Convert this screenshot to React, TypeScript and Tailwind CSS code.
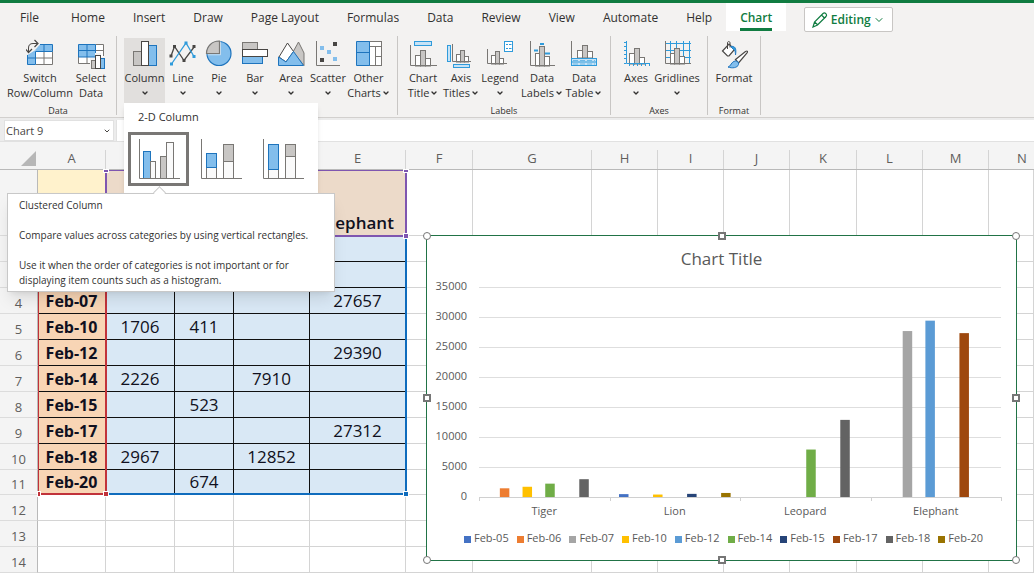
import { useState, type ReactNode } from 'react';
import { ChevronDown } from 'lucide-react';

const TABS = [
    'File', 'Home', 'Insert', 'Draw', 'Page Layout', 'Formulas',
    'Data', 'Review', 'View', 'Automate', 'Help', 'Chart'
];

const ANIMALS = ['Tiger', 'Lion', 'Leopard', 'Elephant'];

type Series = { date: string; color: string; values: (number | null)[] };

const SERIES: Series[] = [
    { date: 'Feb-05', color: '#4472c4', values: [null, 480, null, null] },
    { date: 'Feb-06', color: '#ed7d31', values: [1450, null, null, null] },
    { date: 'Feb-07', color: '#a5a5a5', values: [null, null, null, 27657] },
    { date: 'Feb-10', color: '#ffc000', values: [1706, 411, null, null] },
    { date: 'Feb-12', color: '#5b9bd5', values: [null, null, null, 29390] },
    { date: 'Feb-14', color: '#70ad47', values: [2226, null, 7910, null] },
    { date: 'Feb-15', color: '#264478', values: [null, 523, null, null] },
    { date: 'Feb-17', color: '#9e480e', values: [null, null, null, 27312] },
    { date: 'Feb-18', color: '#636363', values: [2967, null, 12852, null] },
    { date: 'Feb-20', color: '#997300', values: [null, 674, null, null] },
];

const COLUMNS = [
    { name: 'A', width: 'w-[68px]' },
    { name: 'B', width: 'w-[69px]' },
    { name: 'C', width: 'w-[59px]' },
    { name: 'D', width: 'w-[76px]' },
    { name: 'E', width: 'w-24' },
    { name: 'F', width: 'w-[67px]' },
    { name: 'G', width: 'w-[119px]' },
    { name: 'H', width: 'w-[66px]' },
    { name: 'I', width: 'w-[66px]' },
    { name: 'J', width: 'w-[66px]' },
    { name: 'K', width: 'w-[67px]' },
    { name: 'L', width: 'w-[66px]' },
    { name: 'M', width: 'w-[66px]' },
    { name: 'N', width: '' },
];

const BLUE = '#83beec';
const EDGE = '#1e74bd';
const SKY = '#2f9bdb';
const GRAY = '#c8c6c4';
const INK = '#484644';
const LINE = '#797774';

/* Ribbon icons */

function Icon({ children }: { children: ReactNode }) {
    return (
        <svg width="28" height="32" viewBox="0 0 28 32" fill="none" className="shrink-0" aria-hidden="true">
            {children}
        </svg>
    );
}

// three small bars standing on a baseline: [x, y, width]
function MiniBars({ bars, base }: { bars: number[][]; base: number }) {
    return (
        <>
            {bars.map(([x, y, w], i) => (
                <rect key={x} x={x + 0.5} y={y + 0.5} width={w} height={base - y - 0.5} fill={i === 1 ? GRAY : '#fff'} stroke={LINE} />
            ))}
        </>
    );
}

const SwitchIcon = () => (
    <Icon>
        <path d="M14 6.500h12.500v7H9.500v-2z" fill={BLUE} />
        <path d="M1.500 17l8-5v14.500h-8z" fill={BLUE} />
        <path d="M10 13.500h16.500v13H10z" fill="#fff" />
        <path d="M10 20h16.500M18 13.500v13M10 26.500h16.500v-13" stroke={LINE} />
        <path d="M14 6.500h12.500v7H9.500v13h-8V17M18 6.500v7M1.500 20h8" stroke={EDGE} />
        <path d="M2.500 14.500V10c0-3 1.500-4.500 4.500-4.500h4.500" stroke={INK} />
        <path d="M-.5 11l3 3.500L6 11M8.500 2l3.500 3.500L8.500 9" stroke={INK} strokeWidth="1.200" />
    </Icon>
);

const SelectIcon = () => (
    <Icon>
        <path d="M1.500 6.500h17V19h-17z" fill={BLUE} />
        <path d="M1.500 19h17v6.500h-17zM18.500 6.500h8v13h-8z" fill="#fff" />
        <path d="M1.500 19v6.500H14M10 19v6.500M18.500 19v-6.500M18.500 6.500h8V18M18.500 12.500h8" stroke={LINE} />
        <path d="M1.500 6.500h17V19h-17zM1.500 12.500h17M10 6.500V19" stroke={EDGE} />
        <path d="M13 20h5v-5h6v4h4v13H13z" fill="#f3f2f1" />
        <rect x="14.500" y="22.500" width="4" height="8" fill={GRAY} stroke={LINE} />
        <rect x="23.500" y="20.500" width="4" height="10" fill={BLUE} stroke={EDGE} />
        <rect x="18.500" y="17.500" width="5" height="13" fill="#fff" stroke={INK} />
    </Icon>
);

const ColumnIcon = () => (
    <Icon>
        <rect x="2.500" y="13.500" width="8" height="14" fill={GRAY} stroke={LINE} />
        <rect x="17.500" y="7.500" width="8" height="20" fill={BLUE} stroke={EDGE} />
        <rect x="10.500" y="3.500" width="7" height="24" fill="#fff" stroke={INK} />
    </Icon>
);

const LineIcon = () => (
    <Icon>
        <path d="M2 18L5.500 8.500 15 22.500 25.500 8.500" stroke={INK} strokeWidth="1.300" />
        <path d="M2.500 26L17 5l8 13.500" stroke={SKY} strokeWidth="1.300" />
        {[[2, 18], [5.5, 8.5], [15, 22.5], [25, 8.5]].map(([x, y]) => (
            <rect key={x} x={x - 1.5} y={y - 1.5} width="3" height="3" fill={INK} />
        ))}
        {[[2.5, 26], [17, 5], [25, 18.5]].map(([x, y]) => (
            <rect key={x} x={x - 1.5} y={y - 1.5} width="3" height="3" fill={SKY} />
        ))}
    </Icon>
);

const PieIcon = () => (
    <Icon>
        <circle cx="14" cy="15.500" r="12" fill={BLUE} stroke={EDGE} strokeWidth="1.200" />
        <path d="M14.500 15.500V3A12.500 12.500 0 0 0 1.500 15.500z" fill={GRAY} stroke={LINE} strokeWidth="1.200" />
        <path d="M2.500 16.800H15.500V3.500" stroke="#f3f2f1" strokeWidth=".6" />
    </Icon>
);

const BarIcon = () => (
    <Icon>
        <rect x="1.500" y="4.500" width="15" height="7" fill={GRAY} stroke={LINE} />
        <rect x="1.500" y="18.500" width="20" height="7" fill={BLUE} stroke={EDGE} />
        <rect x="1.500" y="11.500" width="25" height="7" fill="#fff" stroke={INK} />
    </Icon>
);

const AreaIcon = () => (
    <Icon>
        <path d="M16 14l5.500-10L27 15v12.500z" fill={GRAY} stroke={LINE} />
        <path d="M2 19l8.500-14L16.500 13.500 9 24z" fill="#fff" stroke={INK} />
        <path d="M1.500 27.500V19L9 24l7.500-10.500L26.500 27.500z" fill={BLUE} stroke={EDGE} />
    </Icon>
);

const ScatterIcon = () => (
    <Icon>
        <path d="M2.500 3v24.500H26" stroke={LINE} />
        <path d="M6 8h4v4H6zM13 12h4v4h-4zM19 19h4v4h-4z" fill={BLUE} />
        <path d="M19 4h4v4h-4zM6 20h4v4H6z" fill={INK} />
    </Icon>
);

const OtherIcon = () => (
    <Icon>
        <rect x="14.500" y="3.500" width="12" height="24" fill="#fff" stroke={LINE} />
        <path d="M14.500 8.500h12M20.500 8.500v19M20.500 18.500h6" stroke={LINE} />
        <path d="M1.500 3.500h13v24h-13zM1.500 14.500h13" fill={BLUE} stroke={EDGE} />
    </Icon>
);

const ChartTitleIcon = () => (
    <Icon>
        <rect x="5.500" y="3.500" width="17" height="4" fill="#c7e3f6" stroke={SKY} />
        <MiniBars base={28} bars={[[6, 17, 5], [11, 12, 5], [16, 20, 5]]} />
        <path d="M1.500 7v20.500H28" stroke={LINE} />
    </Icon>
);

const AxisTitlesIcon = () => (
    <Icon>
        <rect x=".5" y="7.500" width="3" height="16" fill="#c7e3f6" stroke={SKY} />
        <rect x="6.500" y="26.500" width="16" height="3" fill="#c7e3f6" stroke={SKY} />
        <MiniBars base={24} bars={[[9, 16, 4], [13, 12, 4], [17, 18, 4]]} />
        <path d="M5.500 6v17.500H24" stroke={LINE} />
    </Icon>
);

const LegendIcon = () => (
    <Icon>
        <MiniBars base={26} bars={[[5, 17, 4], [9, 13, 4], [13, 20, 4]]} />
        <path d="M1.500 11v14.500H21" stroke={LINE} />
        <rect x="18.500" y="3.500" width="8" height="10" fill="#fff" stroke={SKY} />
        <path d="M20 6.500h2M23 6.500h2.500M20 10.500h2M23 10.500h2.500" stroke={SKY} />
    </Icon>
);

const DataLabelsIcon = () => (
    <Icon>
        <MiniBars base={28} bars={[[7, 15, 4], [11, 8, 5], [16, 18, 5]]} />
        <path d="M2.500 3v24.500H27" stroke={LINE} />
        <path d="M6 12.500h4M12 6h4M17 15.500h5" stroke={SKY} strokeWidth="2" />
    </Icon>
);

const DataTableIcon = () => (
    <Icon>
        <MiniBars base={20} bars={[[7, 12, 5], [12, 7, 5], [17, 13, 5]]} />
        <path d="M1.500 3v18" stroke={LINE} />
        <rect x="1.500" y="20.500" width="25" height="7" fill="#c7e3f6" stroke={SKY} />
        <path d="M1.500 24h25" stroke={SKY} />
        <path d="M3 22.500h22M3 26h22" stroke={SKY} strokeDasharray="5 2" strokeWidth=".6" />
    </Icon>
);

const AxesIcon = () => (
    <Icon>
        <MiniBars base={26} bars={[[7, 15, 5], [12, 10, 5], [17, 19, 5]]} />
        <path d="M4.500 3v22.500H28" stroke={SKY} />
        <path d="M2 4.500h2M2 8.500h2M2 12.500h2M2 16.500h2M2 20.500h2M2 25.500h2M7.500 26v2M11.500 26v2M15.500 26v2M19.500 26v2M23.500 26v2M27.500 26v2" stroke={SKY} />
    </Icon>
);

const GridlinesIcon = () => (
    <Icon>
        <path d="M2 5.500h26M2 12.500h26M2 19.500h26M7.500 3v22M13.500 3v22M20.500 3v22M26.500 3v22" stroke={SKY} />
        <MiniBars base={26} bars={[[7, 15, 4], [11, 10, 5], [16, 18, 5]]} />
        <path d="M2.500 3v22.500H28" stroke={LINE} />
    </Icon>
);

const FormatIcon = () => (
    <Icon>
        <path d="M2.500 13l6.500-7 5.500 5.500-5.500 6.500H7.500z" fill="#fff" stroke={INK} strokeWidth="1.200" />
        <path d="M7.500 11V5c0-2 2.500-2 2.500 0v4.500" stroke={INK} />
        <path d="M10.500 8.500c4-1 6.500 1.500 5 8.500 0-3-.5-4.500-2-5.500z" fill={SKY} stroke={EDGE} strokeWidth=".8" />
        <path d="M15.500 21.500L25.500 13.500c2-1.200 2.500 0 1.500 1.500L18.500 25z" fill="#fff" stroke={INK} strokeWidth="1.200" />
        <path d="M15.500 23c2 0 3.500 1.500 3 3.500-1 3.500-6.500 4-10.500 2.500 3-.5 3-5.500 7.500-6z" fill={BLUE} stroke={EDGE} />
    </Icon>
);

/* Ribbon */

type Command = {
    icon: () => ReactNode;
    lines: string[];
    width: string;
    menu?: boolean;
};

const GROUPS: { name: string; pad: string; commands: Command[] }[] = [
    {
        name: 'Data', pad: 'pl-2 pr-[6px]', commands: [
            { icon: SwitchIcon, lines: ['Switch', 'Row/Column'], width: 'w-16' },
            { icon: SelectIcon, lines: ['Select', 'Data'], width: 'w-[38px]' },
        ]
    },
    {
        name: 'Charts', pad: 'px-[7px]', commands: [
            { icon: ColumnIcon, lines: ['Column'], width: 'w-[41px]', menu: true },
            { icon: LineIcon, lines: ['Line'], width: 'w-9', menu: true },
            { icon: PieIcon, lines: ['Pie'], width: 'w-9', menu: true },
            { icon: BarIcon, lines: ['Bar'], width: 'w-9', menu: true },
            { icon: AreaIcon, lines: ['Area'], width: 'w-9', menu: true },
            { icon: ScatterIcon, lines: ['Scatter'], width: 'w-[38px]', menu: true },
            { icon: OtherIcon, lines: ['Other', 'Charts'], width: 'w-[43px]', menu: true },
        ]
    },
    {
        name: 'Labels', pad: 'px-[6px]', commands: [
            { icon: ChartTitleIcon, lines: ['Chart', 'Title'], width: 'w-[38px]', menu: true },
            { icon: AxisTitlesIcon, lines: ['Axis', 'Titles'], width: 'w-[38px]', menu: true },
            { icon: LegendIcon, lines: ['Legend'], width: 'w-10', menu: true },
            { icon: DataLabelsIcon, lines: ['Data', 'Labels'], width: 'w-11', menu: true },
            { icon: DataTableIcon, lines: ['Data', 'Table'], width: 'w-10', menu: true },
        ]
    },
    {
        name: 'Axes', pad: 'pl-[10px] pr-1', commands: [
            { icon: AxesIcon, lines: ['Axes'], width: 'w-[30px]', menu: true },
            { icon: GridlinesIcon, lines: ['Gridlines'], width: 'w-[52px]', menu: true },
        ]
    },
    {
        name: 'Format', pad: 'px-[6px]', commands: [
            { icon: FormatIcon, lines: ['Format'], width: 'w-10' },
        ]
    },
];

function CommandButton({ command, open, onClick }: { command: Command; open: boolean; onClick: () => void }) {
    const { icon: Glyph, lines, menu, width } = command;

    return (
        <button
            onClick={onClick}
            className={`${width} h-[65px] flex flex-col items-center text-[11px] leading-[15px] whitespace-nowrap ${open ? 'bg-[#e1dfdd]' : ''}`}
        >
            <Glyph />
            <span>{lines[0]}</span>
            <span className="h-[15px] flex items-center gap-px">
                {lines[1]}
                {menu && <ChevronDown className="w-2 h-2 shrink-0" strokeWidth={4} />}
            </span>
        </button>
    );
}

function Tabs({ active, onSelect }: { active: string; onSelect: (tab: string) => void }) {
    return (
        <div className="flex items-start h-7 pl-[2px] text-[12px]">
            {TABS.map(tab => (
                <button
                    key={tab}
                    onClick={() => onSelect(tab)}
                    className={`h-7 whitespace-nowrap ${tab === 'File' ? 'px-[18px]' : 'px-[14px]'} ${tab === active ? 'bg-white text-[#107c41] font-semibold' : ''}`}
                >
                    <span className={`flex items-center h-7 pt-1 border-b-3 ${tab === active ? 'border-[#107c41]' : 'border-transparent'}`}>
                        {tab}
                    </span>
                </button>
            ))}
            <button className="mt-1 ml-[18px] w-[89px] h-[25px] shrink-0 flex items-center justify-between px-[7px] bg-white border border-[#c8c6c4] rounded-xs text-[#107c41] font-semibold">
                <svg width="16" height="16" viewBox="0 0 16 16" fill="none" stroke="currentColor" strokeWidth="1.200" aria-hidden="true">
                    <path d="M1 15l1.500-5L11 1.500c2-1.500 4.500 1 3 3L5.500 13 1 15zM9.500 3l3.500 3.500M2.500 10L6 13" />
                </svg>
                Editing
                <ChevronDown className="w-3 h-3" strokeWidth={2} />
            </button>
        </div>
    );
}

/* Column chart gallery */

const GALLERY = [
    {
        name: 'Clustered Column',
        shapes: (
            <>
                <rect x="5.500" y="12.500" width="7" height="27" fill={BLUE} stroke={EDGE} />
                <rect x="12.500" y="22.500" width="5" height="17" fill="#fafafa" stroke={LINE} />
                <rect x="22.500" y="17.500" width="6" height="22" fill={GRAY} stroke={LINE} />
                <rect x="28.500" y="3.500" width="7" height="36" fill="#fafafa" stroke={LINE} />
            </>
        )
    },
    {
        name: 'Stacked Column',
        shapes: (
            <>
                <rect x="6.500" y="28.500" width="10" height="11" fill="#fafafa" stroke={LINE} />
                <rect x="6.500" y="14.500" width="10" height="14" fill={BLUE} stroke={EDGE} />
                <rect x="23.500" y="22.500" width="10" height="17" fill="#fafafa" stroke={LINE} />
                <rect x="23.500" y="5.500" width="10" height="17" fill={GRAY} stroke={LINE} />
            </>
        )
    },
    {
        name: '100% Stacked Column',
        shapes: (
            <>
                <rect x="6.500" y="30.500" width="10" height="9" fill="#fafafa" stroke={LINE} />
                <rect x="6.500" y="5.500" width="10" height="25" fill={BLUE} stroke={EDGE} />
                <rect x="23.500" y="17.500" width="10" height="22" fill="#fafafa" stroke={LINE} />
                <rect x="23.500" y="5.500" width="10" height="12" fill={GRAY} stroke={LINE} />
            </>
        )
    },
];

function ColumnGallery() {
    return (
        <div className="absolute left-0 top-full z-20 w-[194px] bg-white shadow-md">
            <div className="h-[29px] pl-[14px] pt-[6px] text-[11px] leading-4">2-D Column</div>
            <div className="flex gap-px pl-1 pb-2">
                {GALLERY.map((item, i) => (
                    <button
                        key={item.name}
                        aria-label={item.name}
                        className={`w-[61px] h-[54px] pt-[2px] flex items-center justify-center border-3 ${i === 0 ? 'border-[#797775]' : 'border-transparent'}`}
                    >
                        <svg width="42" height="42" viewBox="0 0 42 42" fill="none" aria-hidden="true">
                            {item.shapes}
                            <path d="M1.500 0v39.500H42" stroke={LINE} />
                        </svg>
                    </button>
                ))}
            </div>

            {/* Tooltip of the highlighted item */}
            <div role="tooltip" className="absolute top-[90px] -left-[117px] w-[328px] h-[99px] px-[11px] pt-1 bg-white border border-[#c8c8c8] shadow-lg text-[10px] leading-[15px] text-[#323130] whitespace-nowrap">
                <span className="absolute left-[147px] -top-[6px] w-[9px] h-[9px] rotate-45 bg-white border-l border-t border-[#c8c8c8]" />
                <p>Clustered Column</p>
                <p className="mt-[15px]">Compare values across categories by using vertical rectangles.</p>
                <p className="mt-[15px]">Use it when the order of categories is not important or for<br />displaying item counts such as a histogram.</p>
            </div>
        </div>
    );
}

function Ribbon() {
    const [tab, setTab] = useState('Chart');
    const [open, setOpen] = useState('Column');

    return (
        <div className="border-t-3 border-[#107c41] bg-[#f3f2f1] text-[#323130]">
            <Tabs active={tab} onSelect={setTab} />
            <div className="flex pt-[5px] h-[87px] border-b border-[#d2d0ce]">
                {GROUPS.map(group => (
                    <div key={group.name} className="h-[79px] border-r border-[#c8c6c4]">
                        <div className={`flex pt-[2px] ${group.pad}`}>
                            {group.commands.map(command => {
                                const name = command.lines.join(' ');
                                return (
                                    <div key={name} className="relative">
                                        <CommandButton
                                            command={command}
                                            open={open === name}
                                            onClick={() => setOpen(open === name ? '' : name)}
                                        />
                                        {name === 'Column' && open === name && <ColumnGallery />}
                                    </div>
                                );
                            })}
                        </div>
                        <div className="text-[9px] leading-4 text-center">{group.name}</div>
                    </div>
                ))}
            </div>
        </div>
    );
}

function FormulaBar() {
    return (
        <div className="flex gap-[2px] h-6 pl-1 pt-[2px] bg-[#ececec] border-b border-[#e1e1e1]">
            <div className="w-[110px] flex items-center bg-white border border-[#e1e1e1] pr-[2px]">
                <input
                    aria-label="Name box"
                    defaultValue="Chart 9"
                    className="w-0 grow pl-px pt-[2px] text-[11px] text-[#484644] focus:outline-none"
                />
                <ChevronDown className="w-2 h-2 text-[#484644]" strokeWidth={3} />
            </div>
            <input aria-label="Formula" className="grow bg-white border-l border-[#e1e1e1] focus:outline-none" />
        </div>
    );
}

/* Sheet */

// cell texts by row number, from column A on
const CELLS: Record<number, (string | number)[]> = {
    1: ['', '', '', '', 'Elephant'],
    4: ['Feb-07', '', '', '', 27657],
    5: ['Feb-10', 1706, 411, '', ''],
    6: ['Feb-12', '', '', '', 29390],
    7: ['Feb-14', 2226, '', 7910, ''],
    8: ['Feb-15', '', 523, '', ''],
    9: ['Feb-17', '', '', '', 27312],
    10: ['Feb-18', 2967, '', 12852, ''],
    11: ['Feb-20', '', 674, '', ''],
};

function rowHeight(n: number) {
    if (n === 1) return 'h-[66px]';
    return n === 11 ? 'h-[25px]' : 'h-[26px]';
}

function cellStyle(n: number, col: number) {
    if (n > 11 || col > 4) return 'border-[#d4d4d4] text-[17px]';
    if (n === 1) return `border-[#101010] text-[17px] font-semibold ${col === 0 ? 'bg-[#fff2cc]' : 'bg-[#ecdac9]'}`;
    return `border-[#101010] ${col === 0 ? 'bg-[#f8d5b5] text-base font-bold' : 'bg-[#d9e8f5] text-[17px]'}`;
}

function Sheet() {
    return (
        <table className="w-full table-fixed border-separate border-spacing-0">
            <colgroup>
                <col className="w-[38px]" />
                {COLUMNS.map(c => <col key={c.name} className={c.width} />)}
            </colgroup>
            <thead>
                <tr className="h-7 bg-[#f4f4f4] text-[13px] text-[#605e5c]">
                    <th className="p-0 border-b border-[#b9b9b9]">
                        <div className="flex justify-end items-center h-[27px] pr-[2px] pt-[5px]">
                            <svg width="15" height="15" viewBox="0 0 15 15" aria-label="Select all"><path d="M15 0v15H0z" fill="#b7b7b7" /></svg>
                        </div>
                    </th>
                    {COLUMNS.map(c => (
                        <th key={c.name} className={`p-0 font-normal border-b border-[#b9b9b9] ${c.name === 'N' ? 'text-left' : ''}`}>
                            <div className={`flex items-center h-[19px] mt-2 pb-[2px] border-[#d4d4d4] ${c.name === 'N' ? 'pl-7' : 'justify-center border-r'}`}>{c.name}</div>
                        </th>
                    ))}
                </tr>
            </thead>
            <tbody>
                {Array.from({ length: 14 }, (_, i) => i + 1).map(n => (
                    <tr key={n} className={rowHeight(n)}>
                        <th className="p-0 bg-[#f4f4f4] border-r border-b border-r-[#b9b9b9] border-b-[#dcdcdc] text-[13px] leading-5 font-normal text-[#605e5c] align-bottom">{n}</th>
                        {COLUMNS.map((c, col) => (
                            <td
                                key={c.name}
                                className={`p-0 border-r border-b text-center align-bottom leading-6 text-[#101020] ${cellStyle(n, col)}`}
                            >
                                {CELLS[n]?.[col]}
                            </td>
                        ))}
                    </tr>
                ))}
            </tbody>
        </table>
    );
}

// Coloured outlines around the ranges the chart reads from
function RangeOutlines() {
    return (
        <div className="absolute left-[38px] top-7 pointer-events-none">
            <div className="absolute left-0 top-[66px] w-[69px] h-[259px] border-2 border-l-1 border-t-0 border-[#c1323a]" />
            <div className="absolute left-[67px] top-[66px] w-[302px] h-[259px] border-2 border-l-0 border-t-0 border-[#0f6cbd]" />
            <div className="absolute left-[67px] top-0 w-[302px] h-[67px] border-2 border-t-1 border-[#7f56b0]" />
            <div className="absolute left-[66px] top-0 w-1 h-[2px] bg-[#7f56b0] outline outline-white" />
            <div className="absolute left-[366px] top-0 w-1 h-[2px] bg-[#7f56b0] outline outline-white" />
            <div className="absolute left-[366px] top-16 w-1 h-1 bg-[#7f56b0] outline outline-white" />
            <div className="absolute left-[66px] top-[322px] w-1 h-1 bg-[#c1323a] outline outline-white" />
            <div className="absolute left-0 top-[322px] w-[2px] h-1 bg-[#c1323a] outline outline-white" />
            <div className="absolute left-[366px] top-[322px] w-1 h-1 bg-[#0f6cbd] outline outline-white" />
        </div>
    );
}

/* Chart */

const PLOT = { left: 52, right: 574, top: 14, bottom: 224, max: 35000 };
const TICKS = [0, 5000, 10000, 15000, 20000, 25000, 30000, 35000];

function yOf(value: number) {
    return PLOT.bottom - (value / PLOT.max) * (PLOT.bottom - PLOT.top);
}

function Plot() {
    const band = (PLOT.right - PLOT.left) / ANIMALS.length;
    const step = band / 11.5;

    return (
        <svg viewBox="0 0 589 250" className="block w-full" aria-label="Column chart">
            {TICKS.map(t => (
                <g key={t}>
                    <path d={`M${PLOT.left} ${Math.round(yOf(t)) + 0.5}H${PLOT.right}`} stroke={t ? '#dedede' : '#d0d0d0'} />
                    <text x="40" y={Math.round(yOf(t)) + 3} textAnchor="end" fontSize="11" fill="#595959">{t}</text>
                </g>
            ))}
            {[0, 1, 2, 3, 4].map(i => (
                <path key={i} d={`M${Math.round(PLOT.left + band * i) + 0.5} 224v4`} stroke="#d0d0d0" />
            ))}
            {ANIMALS.map((animal, a) => (
                <g key={animal}>
                    {SERIES.map((series, s) => {
                        const value = series.values[a];
                        if (!value) return null;
                        const x = PLOT.left + band * a + 9.5 + step * s;
                        return <rect key={series.date} x={x} y={yOf(value)} width="9.500" height={PLOT.bottom - yOf(value)} fill={series.color} />;
                    })}
                    <text x={PLOT.left + band * (a + 0.5)} y="242" textAnchor="middle" fontSize="11" fill="#595959">{animal}</text>
                </g>
            ))}
        </svg>
    );
}

const HANDLES = [
    '-left-1 -top-1 rounded-full',
    'left-1/2 -translate-x-1/2 -top-1',
    '-right-1 -top-1 rounded-full',
    '-left-1 top-1/2 -translate-y-1/2',
    '-right-1 top-1/2 -translate-y-1/2',
    '-left-1 -bottom-1 rounded-full',
    'left-1/2 -translate-x-1/2 -bottom-1',
    '-right-1 -bottom-1 rounded-full',
];

function ChartObject() {
    return (
        <div className="absolute left-[426px] top-[93px] w-[591px] h-[326px] bg-white border border-[#217346]">
            <h2 className="pt-[9px] text-center text-[17px] leading-7 text-[#595959]">Chart Title</h2>
            <Plot />
            <ul className="flex justify-center gap-2 pt-[7px] pl-1 text-[11px] leading-4 text-[#595959]">
                {SERIES.map(series => (
                    <li key={series.date} className="flex items-center gap-[3px]">
                        <span className="w-[7px] h-[7px] mt-[2px]" style={{ backgroundColor: series.color }} />
                        {series.date}
                    </li>
                ))}
            </ul>
            {HANDLES.map(place => (
                <span key={place} className={`absolute w-2 h-2 bg-white border-[#767676] ${place.includes('full') ? 'border' : 'border-2 border-[#9a9a9a]'} ${place}`} />
            ))}
        </div>
    );
}

export default function App() {
    return (
        <div className="h-screen flex flex-col overflow-hidden bg-white font-['Open_Sans','Noto_Sans',sans-serif]">
            <Ribbon />
            <FormulaBar />
            <div className="relative grow min-h-0 overflow-hidden">
                <Sheet />
                <RangeOutlines />
                <ChartObject />
            </div>
        </div>
    );
}
